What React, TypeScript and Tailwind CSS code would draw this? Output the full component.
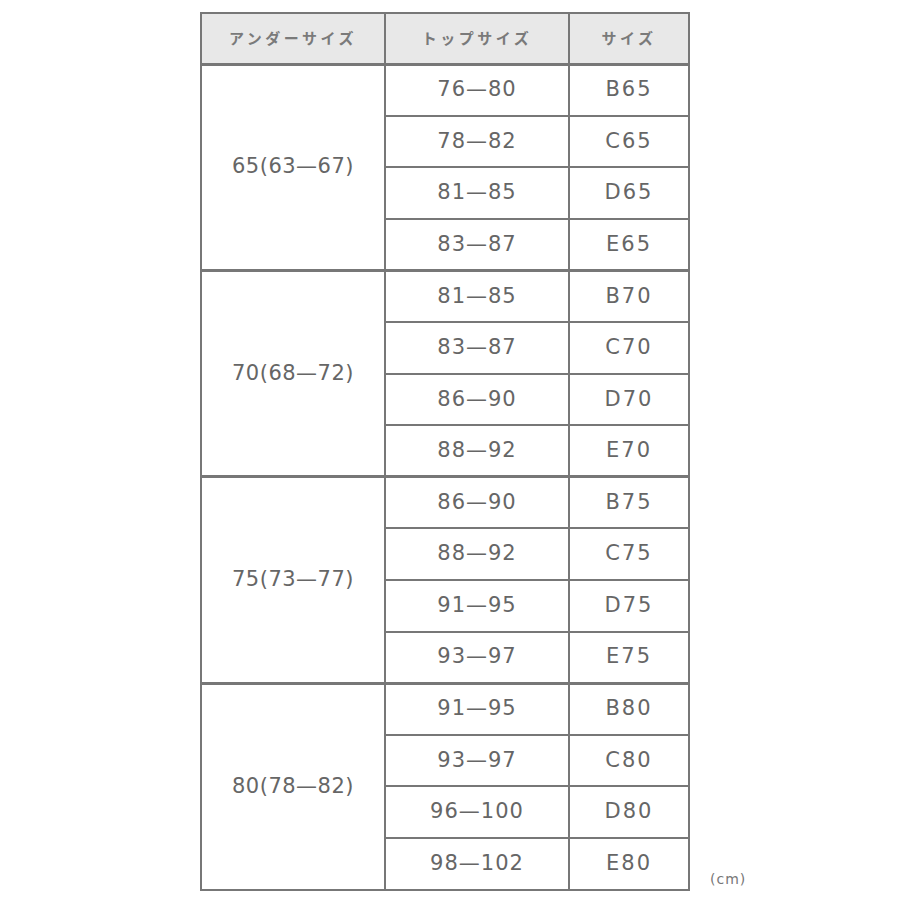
import React from "react";

const groups = [
  { under: "65(63—67)", rows: [["76—80", "B65"], ["78—82", "C65"], ["81—85", "D65"], ["83—87", "E65"]] },
  { under: "70(68—72)", rows: [["81—85", "B70"], ["83—87", "C70"], ["86—90", "D70"], ["88—92", "E70"]] },
  { under: "75(73—77)", rows: [["86—90", "B75"], ["88—92", "C75"], ["91—95", "D75"], ["93—97", "E75"]] },
  { under: "80(78—82)", rows: [["91—95", "B80"], ["93—97", "C80"], ["96—100", "D80"], ["98—102", "E80"]] },
];

const jp = { fontFamily: '"Noto Sans CJK JP", "Noto Sans", sans-serif' };
const num = { fontFamily: '"DejaVu Sans", "Noto Sans CJK JP", sans-serif' };

export default function App() {
  return (
    <div className="w-[900px] h-[900px] bg-white">
      <div className="flex items-end pt-[12px] pl-[200px]">
        <table className="border-collapse table-fixed text-[#666]" style={num}>
          <colgroup>
            <col className="w-[184px]" />
            <col className="w-[184px]" />
            <col className="w-[120px]" />
          </colgroup>
          <thead>
            <tr className="h-[51px] bg-[#e8e8e8]" style={jp}>
              <th className="border-2 border-[#777] text-[15px] font-bold tracking-[3.5px] text-center text-[#7a7a7a]">アンダーサイズ</th>
              <th className="border-2 border-[#777] text-[15px] font-bold tracking-[3.5px] text-center text-[#7a7a7a]">トップサイズ</th>
              <th className="border-2 border-[#777] text-[15px] font-bold tracking-[3.5px] text-center text-[#7a7a7a]">サイズ</th>
            </tr>
          </thead>
          <tbody>
            {groups.map((g, gi) =>
              g.rows.map((r, ri) => (
                <tr key={gi + "-" + ri} className="h-[51.6px]">
                  {ri === 0 && (
                    <td
                      rowSpan={4}
                      className="border-2 border-t-[3px] border-[#777] text-center text-[21px] tracking-[0.5px]"
                    >
                      {g.under}
                    </td>
                  )}
                  <td className={"border-2 border-[#777] text-center text-[21px] tracking-[1px] " + (ri === 0 ? "border-t-[3px]" : "")}>
                    {r[0]}
                  </td>
                  <td className={"border-2 border-[#777] text-center text-[21px] tracking-[2px] " + (ri === 0 ? "border-t-[3px]" : "")}>
                    {r[1]}
                  </td>
                </tr>
              ))
            )}
          </tbody>
        </table>
        <div className="ml-[20px] mb-[1px] text-[14px] tracking-[1px] text-[#777]" style={num}>(cm)</div>
      </div>
    </div>
  );
}
